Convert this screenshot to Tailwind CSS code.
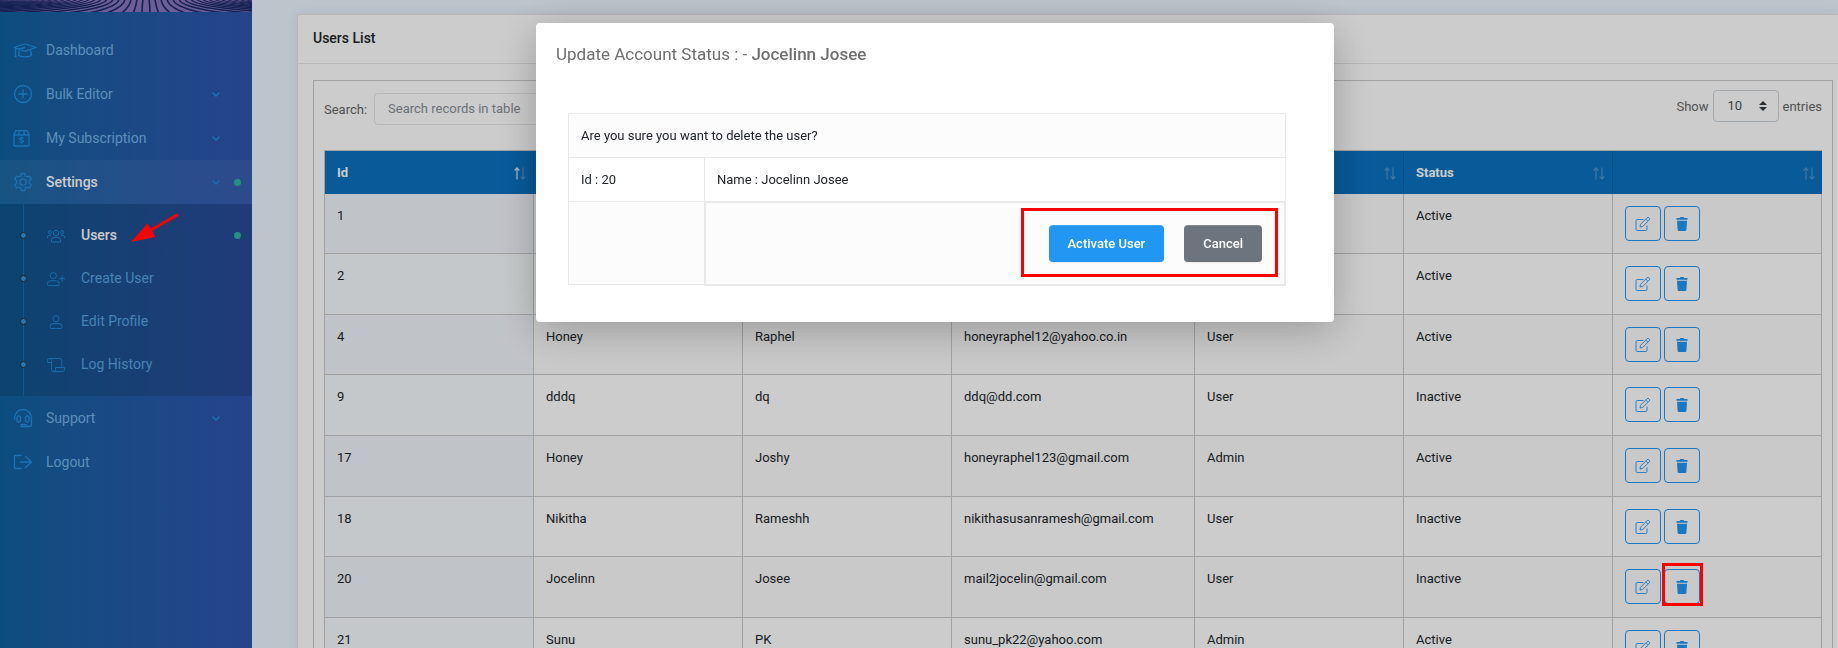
<!DOCTYPE html>
<html lang="en">

<head>
    <meta charset="UTF-8" />
    <meta name="viewport" content="width=device-width, initial-scale=1.0" />
    <title>Users List</title>
    <script src="https://cdn.jsdelivr.net/npm/@tailwindcss/browser@4"></script>
</head>

<body class="flex h-screen overflow-hidden bg-[#ebf5ff] font-[Roboto,'Liberation_Sans',sans-serif] text-[13px] leading-[19px] text-[#212529]">
    <!-- icons used more than once -->
    <svg class="hidden">
        <symbol id="chevron" viewBox="0 0 8 5">
            <path d="M1 1l3 3 3-3" fill="none" stroke="currentColor" stroke-width="1.4" stroke-linecap="round" stroke-linejoin="round" />
        </symbol>
        <symbol id="sort" viewBox="0 0 12 13">
            <path d="M3 12.500V1M.7 3.500L3 1l2.300 2.500" fill="none" stroke="currentColor" stroke-width="1.300" />
        </symbol>
        <symbol id="edit" viewBox="0 0 16 16">
            <path d="M8.500 3.500H2.200A1.200 1.200 0 0 0 1 4.700v8.600a1.200 1.200 0 0 0 1.200 1.200h8.600a1.200 1.200 0 0 0 1.200-1.200V9.500M5 11l.5-2.700 6.600-6.600a1.200 1.200 0 0 1 1.700 0l.5.500a1.200 1.200 0 0 1 0 1.700l-6.600 6.600zM10.800 3l2.200 2.200" fill="none" stroke="currentColor" stroke-width="0.9" />
        </symbol>
        <symbol id="trash" viewBox="0 0 12 14">
            <path d="M.5 1h3.300l.6-1h3.200l.6 1h3.300v1.700H.5zM1 3.700h10l-.6 9A1.300 1.300 0 0 1 9.100 14H2.900a1.300 1.300 0 0 1-1.300-1.300z" fill="currentColor" />
        </symbol>
    </svg>

    <aside class="flex w-[252px] shrink-0 flex-col bg-linear-to-r from-[#0f619f] to-[#2e55ae] text-[14px]">
        <svg id="banner" class="h-3 w-full bg-[#8a76bd]" viewBox="0 0 252 12" preserveAspectRatio="none"></svg>
        <nav class="pt-4 text-[#74b5e8]">
            <a href="#" class="flex h-11 items-center pl-[13px]">
                <svg class="h-[18px] w-6 text-[#2490e4]" viewBox="0 0 24 18" fill="none" stroke="currentColor" stroke-width="1.300" stroke-linejoin="round">
                    <path d="M1 6.500L11.500 3q.5-.2 1 0L23 6.500l-10.500 3.700q-.5.2-1 0zM2.500 7.500v8M1.500 15.500h2M4 8.500l8-2M6.500 9.500l-1 4.500c2 2.500 11 2.500 13 0l-1-4.500" />
                </svg>
                <span class="ml-[9px]">Dashboard</span>
            </a>
            <a href="#" class="flex h-11 items-center pr-8 pl-[13px]">
                <svg class="size-5 text-[#2490e4]" viewBox="0 0 20 20" fill="none" stroke="currentColor" stroke-width="1.300">
                    <circle cx="10" cy="10" r="8.500" />
                    <path d="M10 5.500v9M5.500 10h9" />
                </svg>
                <span class="ml-[13px]">Bulk Editor</span>
                <svg class="ml-auto h-[5px] w-2 text-[#2490e4]"><use href="#chevron" /></svg>
            </a>
            <a href="#" class="flex h-11 items-center pr-8 pl-[13px]">
                <svg class="size-[18px] text-[#2490e4]" viewBox="0 0 18 18" fill="none" stroke="currentColor" stroke-width="1.300" stroke-linejoin="round">
                    <path d="M1 5.500L3 1.600h11l2 3.900v10.500a1 1 0 0 1-1 1H2a1 1 0 0 1-1-1zM1 6h15M6 1.600V6M11 1.600V6" />
                    <path d="M10.200 9.700C9.700 8.400 6.900 8.400 6.900 9.900s3.300 1 3.300 2.400-2.800 1.400-3.300.2M8.600 7.700v1.200M8.600 13.200v1.200" />
                </svg>
                <span class="ml-[15px]">My Subscription</span>
                <svg class="ml-auto h-[5px] w-2 text-[#2490e4]"><use href="#chevron" /></svg>
            </a>
            <a href="#" class="relative flex h-11 items-center bg-white/5 pr-8 pl-[13px] text-white">
                <svg class="size-5 text-[#2490e4]" viewBox="0 0 20 20" fill="none" stroke="currentColor" stroke-width="1.300" stroke-linejoin="round">
                    <path d="M8.200 1.500h3.600l.5 2.500 1.700 1 2.400-.9 1.800 3.100-1.900 1.700v2.200l1.900 1.700-1.800 3.100-2.400-.9-1.700 1-.5 2.500H8.200L7.700 16 6 15l-2.400.9-1.800-3.100 1.900-1.700V8.900L1.800 7.200l1.800-3.100L6 5l1.700-1z" />
                    <circle cx="10" cy="10" r="3.200" />
                </svg>
                <span class="ml-[13px] font-medium">Settings</span>
                <svg class="ml-auto h-[5px] w-2 text-[#2490e4]"><use href="#chevron" /></svg>
                <span class="absolute right-[11px] size-[7px] rounded-full bg-[#2ab79c]"></span>
            </a>

            <ul class="relative bg-black/12 py-[10px] text-[#5aa4e0]">
                <li class="absolute inset-y-0 left-[23px] w-px bg-[#2196f3]/40"></li>
                <li>
                    <a href="#" class="relative flex h-[43px] items-center pl-5 text-white">
                        <span class="size-[7px] rounded-full border border-[#2b2b2b] bg-[#2f94e2]"></span>
                        <svg class="ml-5 h-[14px] w-[18px] text-[#2086d8]" viewBox="0 0 18 14" fill="none" stroke="currentColor">
                            <circle cx="9" cy="4" r="2.700" /><circle cx="2.900" cy="3.200" r="1.600" /><circle cx="15.100" cy="3.200" r="1.600" />
                            <path d="M4.500 13v-2a2.500 2.500 0 0 1 2.500-2.500h4A2.500 2.500 0 0 1 13.500 11v2zM.5 9V8A1.500 1.500 0 0 1 2 6.500h2M17.500 9V8A1.500 1.500 0 0 0 16 6.500h-2" />
                        </svg>
                        <span class="ml-4 font-medium">Users</span>
                        <span class="absolute right-[11px] size-[7px] rounded-full bg-[#2ab79c]"></span>
                    </a>
                </li>
                <li>
                    <a href="#" class="relative flex h-[43px] items-center pl-5">
                        <span class="size-[7px] rounded-full border border-[#2b2b2b] bg-[#2f94e2]"></span>
                        <svg class="ml-5 h-[14px] w-[18px] text-[#2086d8]" viewBox="0 0 18 14" fill="none" stroke="currentColor">
                            <circle cx="6.300" cy="3.700" r="3.100" />
                            <path d="M1.500 13.500a1 1 0 0 1-1-1v-1A2.800 2.800 0 0 1 3.300 8.700h6a2.800 2.800 0 0 1 2.800 2.800v1a1 1 0 0 1-1 1zM15 3.700v6M12 6.700h6" />
                        </svg>
                        <span class="ml-4">Create User</span>
                    </a>
                </li>
                <li>
                    <a href="#" class="relative flex h-[43px] items-center pl-5">
                        <span class="size-[7px] rounded-full border border-[#2b2b2b] bg-[#2f94e2]"></span>
                        <svg class="ml-5 h-[14px] w-[18px] text-[#2086d8]" viewBox="0 0 18 14" fill="none" stroke="currentColor">
                            <circle cx="9" cy="3.700" r="3.100" />
                            <path d="M4 13.500a1 1 0 0 1-1-1v-1a2.800 2.800 0 0 1 2.800-2.800h6.400a2.800 2.800 0 0 1 2.800 2.800v1a1 1 0 0 1-1 1z" />
                        </svg>
                        <span class="ml-4">Edit Profile</span>
                    </a>
                </li>
                <li>
                    <a href="#" class="relative flex h-[43px] items-center pl-5">
                        <span class="size-[7px] rounded-full border border-[#2b2b2b] bg-[#2f94e2]"></span>
                        <svg class="ml-5 h-[14px] w-[18px] text-[#2086d8]" viewBox="0 0 18 14" fill="none" stroke="currentColor">
                            <path d="M4.500 4.500h-4V2.300a1.800 1.800 0 0 1 4 0v9.200a2 2 0 0 0 4 0V9.500h9v1.800a2.200 2.200 0 0 1-2.200 2.200H6.500M2.300.5h10.500a2 2 0 0 1 2 2v7" />
                        </svg>
                        <span class="ml-4">Log History</span>
                    </a>
                </li>
            </ul>

            <a href="#" class="flex h-11 items-center pr-8 pl-[13px]">
                <svg class="size-5 text-[#2490e4]" viewBox="0 0 20 20" fill="none" stroke="currentColor" stroke-width="1.300">
                    <path d="M1.500 12v-2a8.500 8.500 0 0 1 17 0v6.500a2 2 0 0 1-2 2H13" />
                    <rect x="4" y="8" width="3.500" height="6" rx="1.500" /><rect x="12.500" y="8" width="3.500" height="6" rx="1.500" />
                    <rect x="8" y="16.500" width="5" height="2.200" rx="1" />
                </svg>
                <span class="ml-[13px]">Support</span>
                <svg class="ml-auto h-[5px] w-2 text-[#2490e4]"><use href="#chevron" /></svg>
            </a>
            <a href="#" class="flex h-11 items-center pl-[13px]">
                <svg class="size-5 text-[#2490e4]" viewBox="0 0 20 20" fill="none" stroke="currentColor" stroke-width="1.300" stroke-linecap="round" stroke-linejoin="round">
                    <path d="M8 3.500H2.500a1 1 0 0 0-1 1v11a1 1 0 0 0 1 1H8M7.500 10h11M12.500 4.500L18.500 10l-6 5.500" />
                </svg>
                <span class="ml-[13px]">Logout</span>
            </a>
        </nav>
    </aside>

    <main class="flex-1 overflow-hidden pt-[14px] pl-[45px]">
        <div class="rounded-l border border-r-0 border-black/10 bg-white shadow-[0_0_13px_rgba(62,44,90,0.08)]">
            <h2 class="border-b border-black/10 px-[15px] pt-[13px] pb-[15px] text-[14px] leading-5 font-medium">Users List</h2>
            <div class="py-4 pr-[5px] pl-[15px]">
                <div class="border border-[#cacaca] px-[10px] pt-[10px]">
                    <div class="flex justify-between pb-[25px] text-[#666]">
                        <div class="flex items-center gap-[7px] pt-[2px]">
                            <label for="search">Search:</label>
                            <input id="search" type="search" placeholder="Search records in table" class="h-8 w-[200px] rounded border border-[#e5e5e5] px-[13px] pb-[2px] text-[13px] placeholder-[#868e96]" />
                        </div>
                        <label class="flex h-[30px] items-center gap-1">Show
                            <span class="relative">
                                <select class="h-8 w-[66px] appearance-none rounded border border-[#ced4da] px-[14px] pb-[2px] text-[13px] text-[#495057]">
                                    <option>10</option>
                                </select>
                                <svg class="absolute top-[11px] right-3 h-[10px] w-2" viewBox="0 0 8 10"><path d="M4 0l4 4H0zM4 10L0 6h8z" fill="#343a40" /></svg>
                            </span>
                            entries
                        </label>
                    </div>
                    <table class="w-full table-fixed border-separate border-spacing-0 border-t border-l border-[#cacaca] text-left">
                        <thead>
                            <tr id="columns" class="h-[43px] bg-[#0a71c0] text-white"></tr>
                        </thead>
                        <tbody id="users"></tbody>
                    </table>
                </div>
            </div>
        </div>
    </main>

    <!-- modal -->
    <div class="fixed inset-0 flex items-start justify-center bg-black/20 pt-[23px] pl-8">
        <div role="dialog" aria-labelledby="modalTitle" class="w-full max-w-[798px] rounded bg-white pt-[18px] pr-9 pb-9 pl-5 shadow-[0_8px_40px_rgba(0,0,0,0.25)]">
            <h4 id="modalTitle" class="text-[17px] leading-[26px] text-[#6f6f6f]">Update Account Status : - <strong class="font-medium">Jocelinn Josee</strong></h4>
            <div class="px-3 pt-[46px]">
                <table class="w-full border-collapse border border-[#e9e9e9]">
                    <tbody>
                        <tr class="h-11 bg-[#fcfcfc]">
                            <td colspan="2" class="border border-[#e9e9e9] px-3">Are you sure you want to delete the user?</td>
                        </tr>
                        <tr class="h-11">
                            <td class="w-[136px] border border-[#e9e9e9] px-3">Id : 20</td>
                            <td class="border border-[#e9e9e9] px-3">Name : Jocelinn Josee</td>
                        </tr>
                        <tr class="h-[83px] bg-[#fcfcfc]">
                            <td class="border border-[#e9e9e9]"></td>
                            <td class="border-2 border-[#e9e9e9] pr-[6px] pb-[2px]">
                                <div class="ml-auto flex h-[69px] w-[257px] items-center justify-end gap-5 border-3 border-[#f00] pt-[2px] pr-[13px]">
                                    <button class="h-[37px] rounded bg-[#2196f3] px-[19px] font-medium text-white shadow-[inset_0_1px_0_rgba(255,255,255,0.15),0_1px_1px_rgba(0,0,0,0.075)]">Activate User</button>
                                    <button class="h-[37px] rounded bg-[#6c757d] px-[19px] font-medium text-white shadow-[inset_0_1px_0_rgba(255,255,255,0.15),0_1px_1px_rgba(0,0,0,0.075)]">Cancel</button>
                                </div>
                            </td>
                        </tr>
                    </tbody>
                </table>
            </div>
        </div>
    </div>

    <!-- arrow to the Users item -->
    <svg class="absolute top-[213px] left-[130px] h-[30px] w-[50px]" viewBox="0 0 50 30" fill="#f00">
        <path d="M48 1.500L20 17.500" stroke="#f00" stroke-width="3" />
        <path d="M1 29L17.500 10.500 25.500 24z" />
    </svg>

    <script>
        const columns = ['Id', '', '', '', '', 'Status', ''];
        const users = [
            [1, '', '', '', '', 'Active'],
            [2, '', '', '', '', 'Active'],
            [4, 'Honey', 'Raphel', 'honeyraphel12@yahoo.co.in', 'User', 'Active'],
            [9, 'dddq', 'dq', 'ddq@dd.com', 'User', 'Inactive'],
            [17, 'Honey', 'Joshy', 'honeyraphel123@gmail.com', 'Admin', 'Active'],
            [18, 'Nikitha', 'Rameshh', 'nikithasusanramesh@gmail.com', 'User', 'Inactive'],
            [20, 'Jocelinn', 'Josee', 'mail2jocelin@gmail.com', 'User', 'Inactive'],
            [21, 'Sunu', 'PK', 'sunu_pk22@yahoo.com', 'Admin', 'Active'],
        ];

        // the e-mail column takes what the equal ones leave
        document.getElementById('columns').innerHTML = columns.map((name, i) => `
            <th class="${i === 3 ? 'w-auto' : 'w-[209px]'} border-r border-black/12 pr-[7px] pl-3 font-bold last:border-r-0">
                <div class="flex items-center justify-between">
                    <span>${name}</span>
                    <span class="ml-auto flex pt-[2px]">
                        <svg class="h-[13px] w-[6px] ${i === 0 ? 'text-white/80' : 'text-white/25'}" viewBox="0 0 6 13"><use href="#sort" width="12" height="13" /></svg>
                        <svg class="h-[13px] w-[6px] rotate-180 text-white/25" viewBox="0 0 6 13"><use href="#sort" width="12" height="13" /></svg>
                    </span>
                </div>
            </th>`).join('');

        document.getElementById('users').innerHTML = users.map((user) => `
            <tr class="group h-[61px] align-top first:h-[60px] odd:bg-[#fcfcfc] nth-[3n]:h-[60px]">
                ${user.map((value) => `<td class="border-r border-b border-[#cacaca] px-3 pt-3 group-odd:first:bg-[#f1f4fa] group-even:first:bg-[#f7fbfd]">${value}</td>`).join('')}
                <td class="border-r border-b border-[#cacaca] px-3 pt-3">
                    <div class="flex gap-[3px]">
                        <button aria-label="Edit" class="flex h-[35px] w-9 items-center justify-center rounded border border-[#2196f3] text-[#2196f3]"><svg class="size-4"><use href="#edit" /></svg></button>
                        <button aria-label="Delete" class="flex h-[35px] w-9 items-center justify-center rounded border border-[#2196f3] text-[#2196f3]"><svg class="h-[14px] w-3"><use href="#trash" /></svg></button>
                        ${user[0] === 20 ? '<span class="relative"><span class="absolute -top-[6px] right-0 z-10 h-[43px] w-[41px] border-3 border-[#f00]"></span></span>' : ''}
                    </div>
                </td>
            </tr>`).join('');

        // banner: lines that fan out from the centre
        let lines = '';
        for (let i = 0; i < 24; i++) {
            const x = 3 + i * 6, far = 4 + i * 7 + i * i * 1.6;
            lines += `<path d="M${146 - x} -1Q${145 - x} 7 ${146 - far} 13M${146 + x} -1Q${147 + x} 7 ${146 + far} 13" />`;
        }
        document.getElementById('banner').innerHTML = `<g fill="none" stroke="#1b2a68" stroke-width="1.6">${lines}</g>`;
    </script>
</body>

</html>
